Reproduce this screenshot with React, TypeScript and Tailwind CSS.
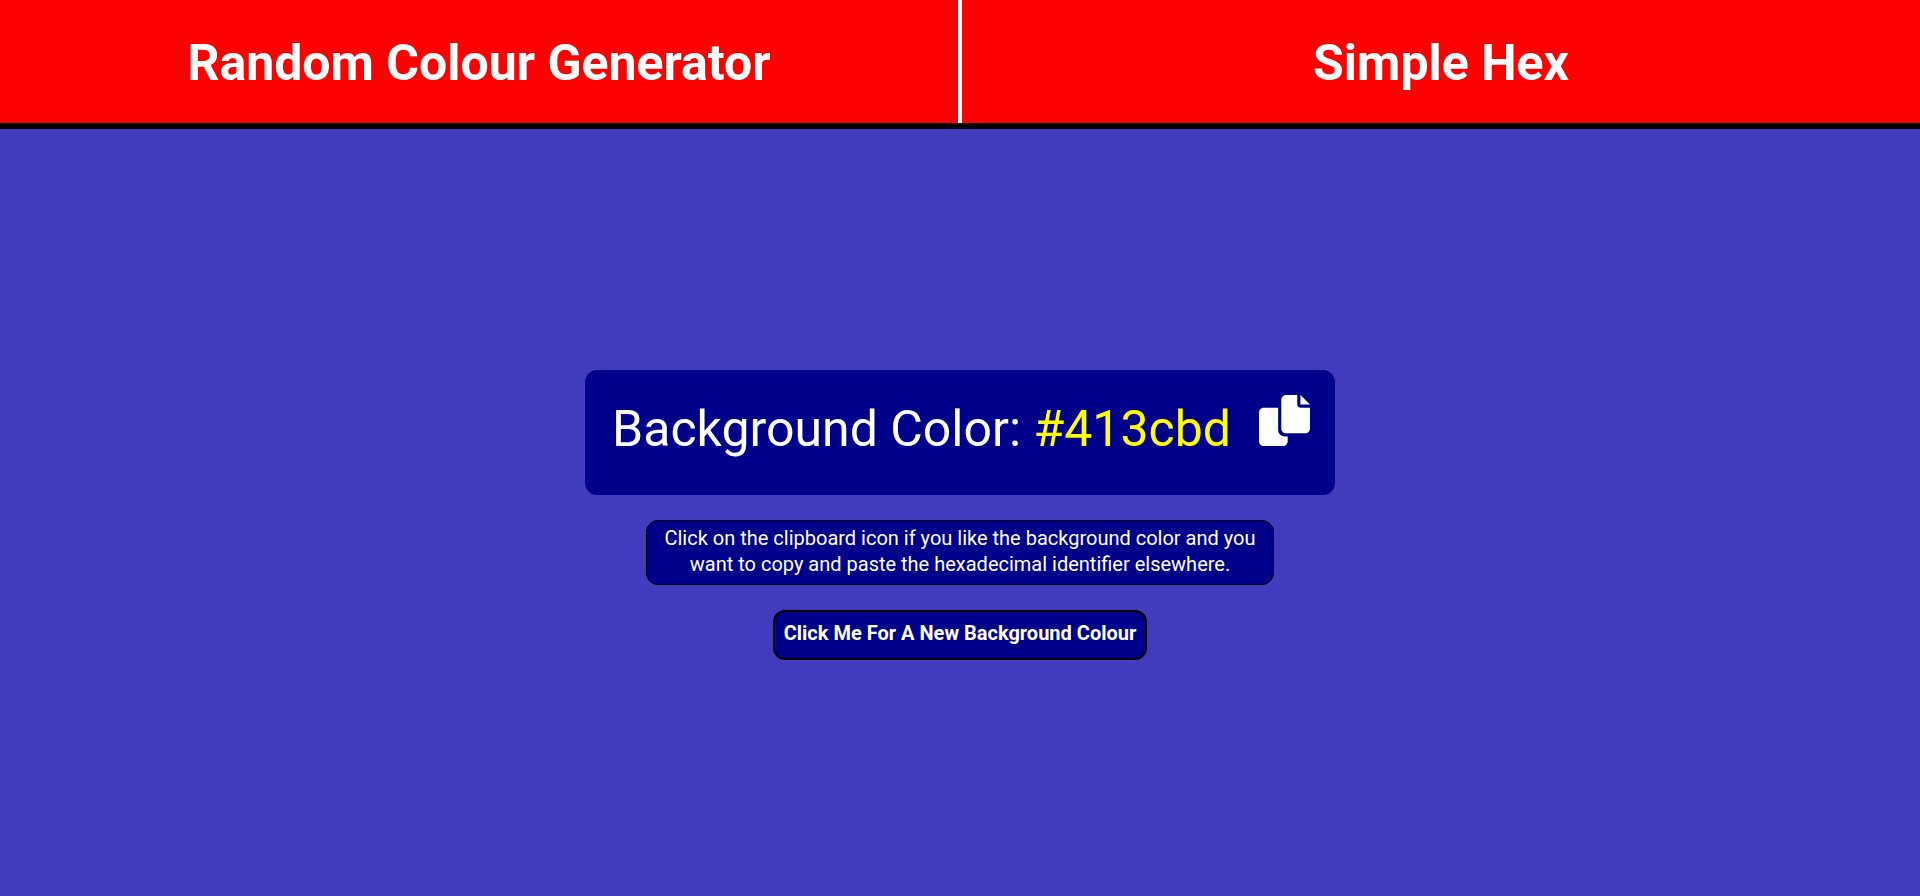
import { useState } from "react";

const NAV_ITEMS = [
  { label: "Random Colour Generator", href: "#random" },
  { label: "Simple Hex", href: "#simple" },
];

function randomHex() {
  return "#" + Math.floor(Math.random() * 0x1000000).toString(16).padStart(6, "0");
}

function CopyIcon() {
  return (
    <svg viewBox="0 0 512 512" className="size-[51px]" fill="currentColor" aria-hidden="true">
      <path d="M384 96V0H272c-26.500 0-48 21.500-48 48v288c0 26.500 21.500 48 48 48h192c26.500 0 48-21.500 48-48V128h-96c-17.600 0-32-14.400-32-32zM416 0v96h96L416 0zM192 352V128H48c-26.500 0-48 21.500-48 48v288c0 26.500 21.500 48 48 48h192c26.500 0 48-21.500 48-48v-48h-32c-35.300 0-64-28.700-64-64z" />
    </svg>
  );
}

export default function App() {
  const [hex, setHex] = useState("#413cbd");

  return (
    <div
      className="flex min-h-screen flex-col font-['Roboto',sans-serif] text-white"
      style={{ backgroundColor: hex }}
    >
      <nav className="grid grid-cols-2 gap-1 border-b-6 border-black bg-white">
        {NAV_ITEMS.map(({ label, href }) => (
          <a
            key={label}
            href={href}
            className="bg-[#ff0000] px-4 pt-[26px] pb-[22px] text-center text-[50px] leading-[75px] font-bold"
          >
            {label}
          </a>
        ))}
      </nav>

      <main className="flex grow flex-col items-center justify-center gap-[25px] px-4 pt-1">
        <section className="flex items-start gap-7 rounded-xl bg-[#00008b] py-[25px] pr-[25px] pl-[27px]">
          <h1 className="pt-0.5 pb-2 text-[50px] leading-[65px]">
            Background Color: <span className="text-[#ffff00]">{hex}</span>
          </h1>
          <button
            type="button"
            aria-label="Copy colour to clipboard"
            className="cursor-pointer"
            onClick={() => navigator.clipboard?.writeText(hex)}
          >
            <CopyIcon />
          </button>
        </section>

        <p className="max-w-[628px] rounded-xl border border-black bg-[#00008b] px-3 pt-1 pb-[7px] text-center text-[20px] leading-[26px]">
          Click on the clipboard icon if you like the background color and you want to copy and paste
          the hexadecimal identifier elsewhere.
        </p>

        <button
          type="button"
          onClick={() => setHex(randomHex())}
          className="cursor-pointer rounded-xl border-2 border-black bg-[#00008b] px-[9px] pt-2 pb-3 text-[20px] leading-[26px] font-bold"
        >
          Click Me For A New Background Colour
        </button>
      </main>
    </div>
  );
}
